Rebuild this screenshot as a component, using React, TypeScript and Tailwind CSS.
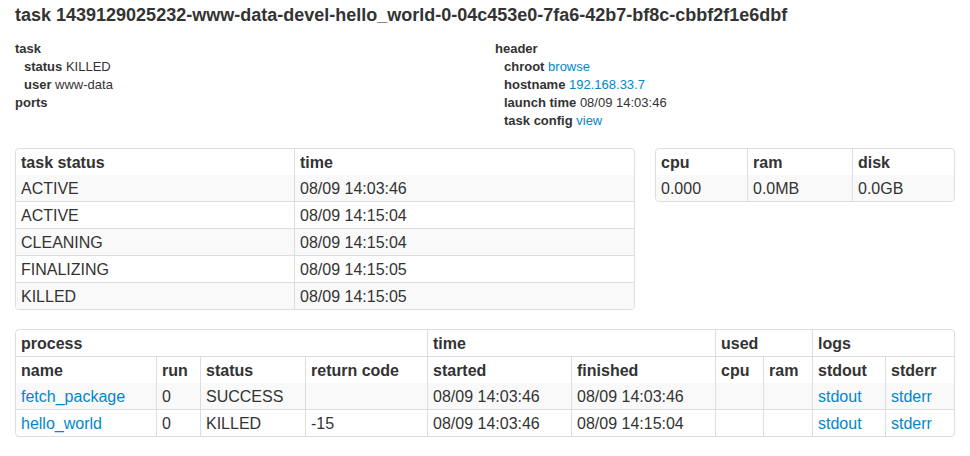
import React from 'react'

const link = 'text-[#0088cc]'

const cellBase = 'px-[5px] pt-[5px] pb-[3px] leading-[18px] text-left align-top border-[#ddd]'

const tableWrap =
  'border border-[#ddd] rounded-[4px] overflow-hidden text-[16px] ' +
  '[&_td]:border-l [&_th]:border-l [&_td]:border-t [&_th]:border-t ' +
  '[&_td:first-child]:border-l-0 [&_th:first-child]:border-l-0 [&_tr:first-child>*]:border-t-0'

const statusRows = [
  ['ACTIVE', '08/09 14:03:46'],
  ['ACTIVE', '08/09 14:15:04'],
  ['CLEANING', '08/09 14:15:04'],
  ['FINALIZING', '08/09 14:15:05'],
  ['KILLED', '08/09 14:15:05'],
]

const processes = [
  { name: 'fetch_package', run: '0', status: 'SUCCESS', code: '', started: '08/09 14:03:46', finished: '08/09 14:03:46' },
  { name: 'hello_world', run: '0', status: 'KILLED', code: '-15', started: '08/09 14:03:46', finished: '08/09 14:15:04' },
]

const Field: React.FC<{ label: string; children?: React.ReactNode }> = ({ label, children }) => (
  <div className="pl-[9px]">
    <span className="font-bold">{label}</span> {children}
  </div>
)

const App: React.FC = () => {
  return (
    <div className="w-[940px] mx-auto font-['Liberation_Sans',Arial,sans-serif] text-[#333] bg-white">
      <h1 className="text-[18px] font-bold leading-[20px] pt-[5px] mb-[15px] whitespace-nowrap">
        task 1439129025232-www-data-devel-hello_world-0-04c453e0-7fa6-42b7-bf8c-cbbf2f1e6dbf
      </h1>

      <div className="flex gap-5 text-[13px] leading-[18px]">
        <div className="w-[460px]">
          <div className="font-bold">task</div>
          <Field label="status">KILLED</Field>
          <Field label="user">www-data</Field>
          <div className="font-bold">ports</div>
        </div>
        <div className="w-[460px]">
          <div className="font-bold">header</div>
          <Field label="chroot"><a className={link}>browse</a></Field>
          <Field label="hostname"><a className={link}>192.168.33.7</a></Field>
          <Field label="launch time">08/09 14:03:46</Field>
          <Field label="task config"><a className={link}>view</a></Field>
        </div>
      </div>

      <div className="flex gap-5 mt-[18px] items-start">
        <div className={`w-[620px] ${tableWrap}`}>
          <table className="w-full table-fixed border-separate border-spacing-0">
            <colgroup>
              <col className="w-[278px]" />
              <col />
            </colgroup>
            <thead>
              <tr>
                <th className={cellBase}>task status</th>
                <th className={cellBase}>time</th>
              </tr>
            </thead>
            <tbody>
              {statusRows.map(([s, t], i) => (
                <tr key={i} className={i % 2 === 0 ? 'bg-[#f9f9f9]' : ''}>
                  <td className={cellBase}>{s}</td>
                  <td className={cellBase}>{t}</td>
                </tr>
              ))}
            </tbody>
          </table>
        </div>

        <div className={`w-[300px] ${tableWrap}`}>
          <table className="w-full table-fixed border-separate border-spacing-0">
            <colgroup>
              <col className="w-[91px]" />
              <col className="w-[105px]" />
              <col />
            </colgroup>
            <thead>
              <tr>
                <th className={cellBase}>cpu</th>
                <th className={cellBase}>ram</th>
                <th className={cellBase}>disk</th>
              </tr>
            </thead>
            <tbody>
              <tr className="bg-[#f9f9f9]">
                <td className={cellBase}>0.000</td>
                <td className={cellBase}>0.0MB</td>
                <td className={cellBase}>0.0GB</td>
              </tr>
            </tbody>
          </table>
        </div>
      </div>

      <div className={`mt-[19px] w-[940px] ${tableWrap}`}>
        <table className="w-full table-fixed border-separate border-spacing-0">
          <colgroup>
            <col className="w-[140px]" />
            <col className="w-[44px]" />
            <col className="w-[105px]" />
            <col className="w-[122px]" />
            <col className="w-[144px]" />
            <col className="w-[144px]" />
            <col className="w-[48px]" />
            <col className="w-[49px]" />
            <col className="w-[73px]" />
            <col />
          </colgroup>
          <thead>
            <tr>
              <th colSpan={4} className={cellBase}>process</th>
              <th colSpan={2} className={cellBase}>time</th>
              <th colSpan={2} className={cellBase}>used</th>
              <th colSpan={2} className={cellBase}>logs</th>
            </tr>
            <tr>
              <th className={cellBase}>name</th>
              <th className={cellBase}>run</th>
              <th className={cellBase}>status</th>
              <th className={cellBase}>return code</th>
              <th className={cellBase}>started</th>
              <th className={cellBase}>finished</th>
              <th className={cellBase}>cpu</th>
              <th className={cellBase}>ram</th>
              <th className={cellBase}>stdout</th>
              <th className={cellBase}>stderr</th>
            </tr>
          </thead>
          <tbody>
            {processes.map((p, i) => (
              <tr key={p.name} className={i % 2 === 0 ? 'bg-[#f9f9f9]' : ''}>
                <td className={cellBase}><a className={link}>{p.name}</a></td>
                <td className={cellBase}>{p.run}</td>
                <td className={cellBase}>{p.status}</td>
                <td className={cellBase}>{p.code}</td>
                <td className={cellBase}>{p.started}</td>
                <td className={cellBase}>{p.finished}</td>
                <td className={cellBase}></td>
                <td className={cellBase}></td>
                <td className={cellBase}><a className={link}>stdout</a></td>
                <td className={cellBase}><a className={link}>stderr</a></td>
              </tr>
            ))}
          </tbody>
        </table>
      </div>
    </div>
  )
}

export default App
